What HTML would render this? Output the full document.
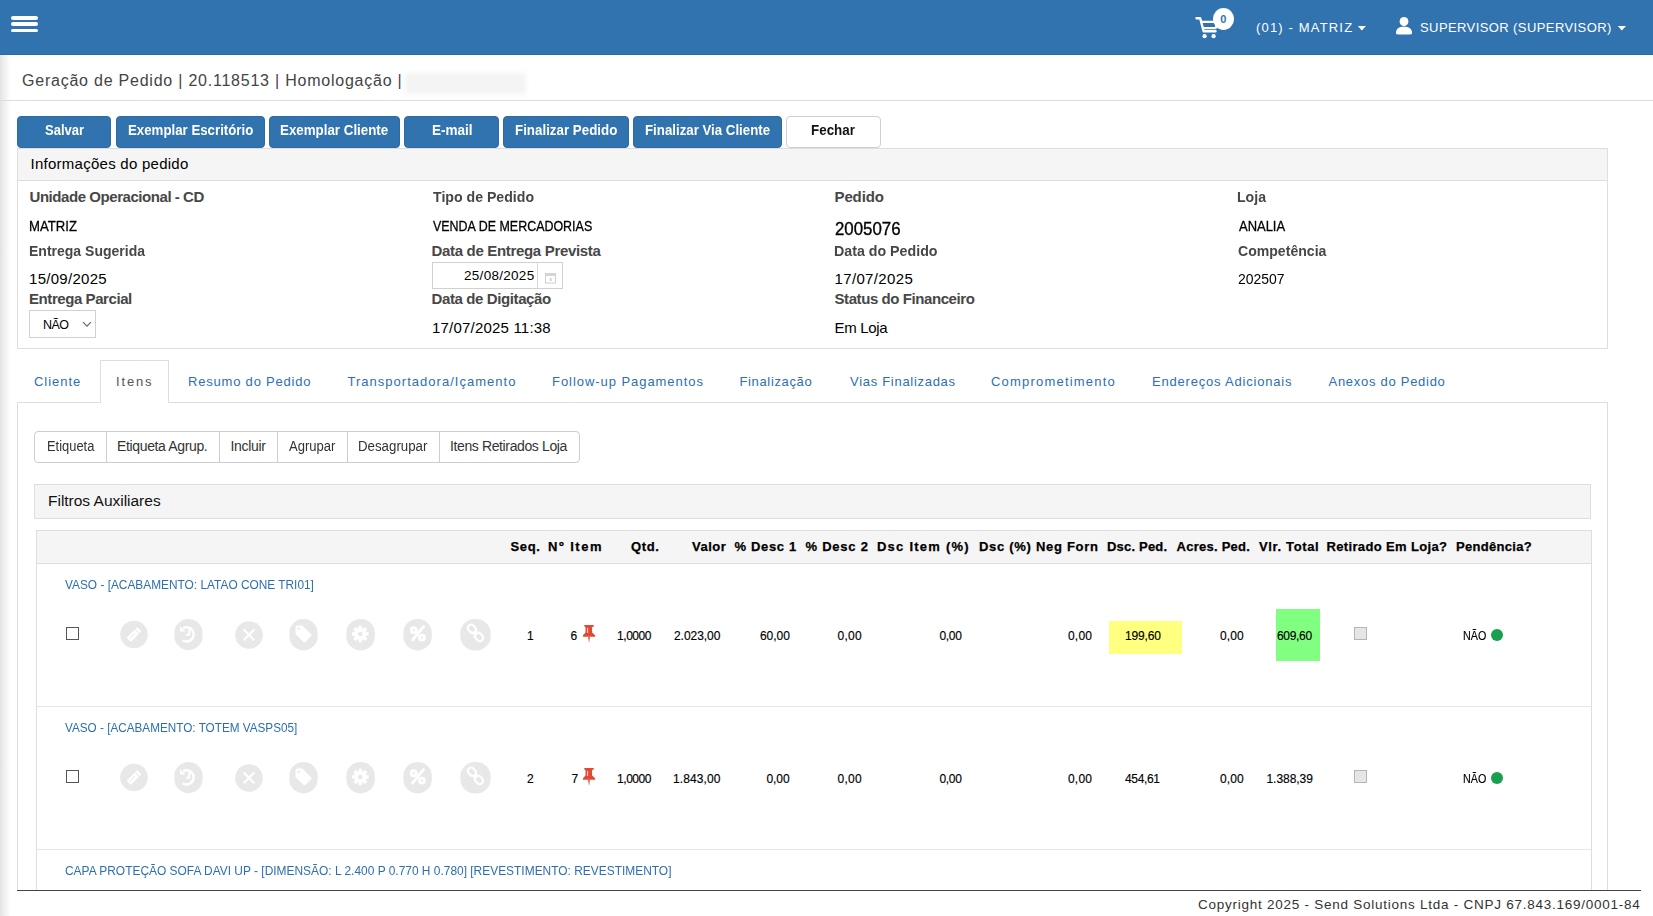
<!DOCTYPE html>
<html><head><meta charset="utf-8"><style>
html,body{margin:0;padding:0;background:#fff;width:1653px;height:916px;overflow:hidden;position:relative;font-family:"Liberation Sans",sans-serif}
.t{position:absolute;white-space:nowrap;line-height:0;font-family:"Liberation Sans",sans-serif}
.a{position:absolute;box-sizing:border-box}
.hdr{left:0;top:0;width:1653px;height:55px;background:#3173ae;border-bottom:1px solid #2c69a4}
.bar{left:11px;width:27px;height:3.6px;background:#fff;border-radius:2px}
.btn{height:32px;top:116px;background:#3173ae;border:1px solid #2d6aa3;border-radius:4px;color:#fff;font-weight:bold;font-size:14px;display:flex;align-items:center;justify-content:center;white-space:nowrap}
.btn.w{background:#fff;border-color:#cfcfcf;color:#111}
.ic{position:absolute;background:#e8e8e8;border-radius:14px;display:flex;align-items:center;justify-content:center}
.ic svg{display:block}
.cb{position:absolute;width:13px;height:13px;box-sizing:border-box;border:1px solid #555;background:#fff}
.cbg{position:absolute;width:13px;height:13px;box-sizing:border-box;border:1px solid #b5b5b5;background:#e6e6e6}
.dot{position:absolute;width:12px;height:12px;border-radius:50%;background:#17a04e}

</style></head><body>
<div class="a hdr"></div>
<div class="a bar" style="top:16px"></div>
<div class="a bar" style="top:22.3px"></div>
<div class="a bar" style="top:28.5px"></div>
<!-- cart -->
<svg class="a" style="left:1194.5px;top:14.5px" width="26" height="26" viewBox="0 0 26 26">
<path d="M1.5 3.2 H5.2 L8.6 16.2 H20.5" fill="none" stroke="#fff" stroke-width="2.4" stroke-linejoin="round" stroke-linecap="round"/>
<path d="M6.4 6.8 H22.6 L20.6 13.2 H8.2" fill="none" stroke="#fff" stroke-width="2.2" stroke-linejoin="round"/>
<circle cx="9.6" cy="21.2" r="2.1" fill="#fff"/><circle cx="18.6" cy="21.2" r="2.1" fill="#fff"/>
</svg>
<div class="a" style="left:1212.5px;top:8px;width:21.5px;height:22px;border-radius:50%;background:#fff;color:#3173ae;font:bold 11px 'Liberation Sans';display:flex;align-items:center;justify-content:center;line-height:1">0</div>
<svg class="a" style="left:1357px;top:25px" width="10" height="7"><path d="M0.8 1 H9 L4.9 5.6Z" fill="#fff"/></svg>
<svg class="a" style="left:1395px;top:16px" width="18" height="19" viewBox="0 0 18 19">
<ellipse cx="9" cy="5.6" rx="4.4" ry="4.6" fill="#fff"/>
<path d="M1 17.2 C1 12.6 4 10.8 9 10.8 C14 10.8 17 12.6 17 17.2 C17 18.3 16 18.6 9 18.6 C2 18.6 1 18.3 1 17.2Z" fill="#fff"/>
</svg>
<svg class="a" style="left:1617px;top:24.5px" width="10" height="7"><path d="M0.8 1 H9 L4.9 5.6Z" fill="#fff"/></svg>

<!-- left shadow -->
<div class="a" style="left:0;top:55px;width:11px;height:861px;background:linear-gradient(to right,#e3e3e3,#f3f3f3 50%,#fff)"></div>
<!-- blurred -->
<div class="a" style="left:405px;top:73px;width:121px;height:21px;background:#f4f4f4;filter:blur(2.5px)"></div>
<div class="a" style="left:0;top:100px;width:1653px;height:1px;background:#dcdcdc"></div>

<!-- buttons -->
<div class="a btn" style="left:17px;width:94px"></div>
<div class="a btn" style="left:116px;width:149px"></div>
<div class="a btn" style="left:269px;width:131px"></div>
<div class="a btn" style="left:404px;width:95px"></div>
<div class="a btn" style="left:503px;width:126px"></div>
<div class="a btn" style="left:633px;width:149px"></div>
<div class="a btn w" style="left:786px;width:95px"></div>

<!-- info panel -->
<div class="a" style="left:17px;top:148px;width:1591px;height:201px;border:1px solid #dedede"></div>
<div class="a" style="left:18px;top:149px;width:1589px;height:32px;background:#f5f5f5;border-bottom:1px solid #dedede"></div>
<!-- select -->
<div class="a" style="left:29px;top:310px;width:67px;height:28px;border:1px solid #d0d0d0;background:#fff"></div>
<svg class="a" style="left:82px;top:321px" width="10" height="7"><path d="M1 1.2 L5 5.2 L9 1.2" fill="none" stroke="#666" stroke-width="1.2"/></svg>
<!-- date input -->
<div class="a" style="left:432px;top:262px;width:131px;height:27px;border:1px solid #d0d0d0;background:#fff"></div>
<div class="a" style="left:537px;top:263px;width:1px;height:25px;background:#d8d8d8"></div>
<svg class="a" style="left:544px;top:271px" width="13" height="13" viewBox="0 0 13 13">
<rect x="1.5" y="2.5" width="10" height="9.5" fill="none" stroke="#cfcfcf" stroke-width="1"/>
<rect x="1.5" y="2.5" width="10" height="2.5" fill="#d6d6d6"/>
<rect x="5.5" y="7" width="2.5" height="3" fill="#dcdcdc"/>
</svg>

<!-- tabs -->
<div class="a" style="left:17px;top:402px;width:1591px;height:488px;border:1px solid #dedede;border-bottom:none"></div>
<div class="a" style="left:100px;top:360px;width:69px;height:43px;border:1px solid #dedede;border-bottom:none;background:#fff"></div>

<!-- button group -->
<div class="a" style="left:34px;top:431px;width:546px;height:32px;border:1px solid #cdcdcd;border-radius:4px;background:#fff"></div>
<div class="a" style="left:106px;top:432px;width:1px;height:30px;background:#cdcdcd"></div>
<div class="a" style="left:219px;top:432px;width:1px;height:30px;background:#cdcdcd"></div>
<div class="a" style="left:277px;top:432px;width:1px;height:30px;background:#cdcdcd"></div>
<div class="a" style="left:347px;top:432px;width:1px;height:30px;background:#cdcdcd"></div>
<div class="a" style="left:439px;top:432px;width:1px;height:30px;background:#cdcdcd"></div>

<!-- filtros -->
<div class="a" style="left:34px;top:484px;width:1557px;height:35px;border:1px solid #dedede;background:#f5f5f5"></div>

<!-- table -->
<div class="a" style="left:36px;top:530px;width:1556px;height:360px;border:1px solid #dedede;border-bottom:none"></div>
<div class="a" style="left:37px;top:531px;width:1554px;height:33px;background:#f5f5f5;border-bottom:1px solid #dedede"></div>
<div class="a" style="left:37px;top:706px;width:1554px;height:1px;background:#e6e6e6"></div>
<div class="a" style="left:37px;top:849px;width:1554px;height:1px;background:#e6e6e6"></div>

<!-- footer -->
<div class="a" style="left:17px;top:889.5px;width:1624px;height:1.5px;background:#444"></div>

<div class="cb" style="left:66px;top:627.0px"></div>
<svg class="a" style="left:119px;top:619.0px" width="30" height="30" viewBox="0 0 30 30"><circle cx="15" cy="15.5" r="13.8" fill="#e8e8e8"/><g transform="rotate(-45 15 15.5)"><rect x="7.5" y="12.6" width="15" height="5.8" rx="1" fill="#fff"/><rect x="19" y="12.6" width="0.9" height="5.8" fill="#e8e8e8"/><rect x="9.5" y="14.8" width="7" height="0.8" fill="#e8e8e8"/></g></svg>
<svg class="a" style="left:173.5px;top:619.0px" width="29" height="32" viewBox="0 0 29 32"><rect x="0.4" y="0" width="28.2" height="31.2" rx="14" fill="#e8e8e8"/><path d="M9.2 9.3 A7 7 0 1 1 8.6 21.2" fill="none" stroke="#fff" stroke-width="2.6"/><path d="M6 7.2 L6 12.6 L11.6 12.6Z" fill="#fff"/><path d="M15.2 10.6 V15.8 H11.8" fill="none" stroke="#fff" stroke-width="2"/></svg>
<svg class="a" style="left:234.5px;top:620.5px" width="29" height="29" viewBox="0 0 29 29"><circle cx="14" cy="14" r="13.8" fill="#e8e8e8"/><path d="M8.7 8.6 L19.3 19.3 M19.3 8.6 L8.7 19.3" stroke="#fff" stroke-width="2.1"/></svg>
<svg class="a" style="left:288.5px;top:618.8px" width="29" height="32" viewBox="0 0 29 32"><rect x="0.4" y="0" width="28.2" height="31.4" rx="14" fill="#e8e8e8"/><path d="M6.5 8.2 Q6.5 6.6 8.1 6.6 L13.4 6.6 L22.2 15.4 Q23 16.2 22.2 17 L16.2 23 Q15.4 23.8 14.6 23 L6.5 14.9Z" fill="#fff"/><circle cx="9.6" cy="9.8" r="1.2" fill="#e8e8e8"/></svg>
<svg class="a" style="left:345.5px;top:618.8px" width="29" height="32" viewBox="0 0 29 32"><rect x="0.4" y="0" width="28.4" height="31.4" rx="14" fill="#e8e8e8"/><rect x="19.20" y="13.30" width="3.4" height="3.4" transform="rotate(0.0 20.90 15.00)" fill="#fff"/><rect x="17.27" y="17.97" width="3.4" height="3.4" transform="rotate(45.0 18.97 19.67)" fill="#fff"/><rect x="12.60" y="19.90" width="3.4" height="3.4" transform="rotate(90.0 14.30 21.60)" fill="#fff"/><rect x="7.93" y="17.97" width="3.4" height="3.4" transform="rotate(135.0 9.63 19.67)" fill="#fff"/><rect x="6.00" y="13.30" width="3.4" height="3.4" transform="rotate(180.0 7.70 15.00)" fill="#fff"/><rect x="7.93" y="8.63" width="3.4" height="3.4" transform="rotate(225.0 9.63 10.33)" fill="#fff"/><rect x="12.60" y="6.70" width="3.4" height="3.4" transform="rotate(270.0 14.30 8.40)" fill="#fff"/><rect x="17.27" y="8.63" width="3.4" height="3.4" transform="rotate(315.0 18.97 10.33)" fill="#fff"/><circle cx="14.3" cy="15" r="6.2" fill="#fff"/><circle cx="14.3" cy="15" r="2.3" fill="#e8e8e8"/></svg>
<svg class="a" style="left:402.5px;top:618.8px" width="29" height="32" viewBox="0 0 29 32"><rect x="0.4" y="0" width="28.4" height="31.4" rx="14" fill="#e8e8e8"/><circle cx="10.7" cy="11.2" r="2.5" fill="none" stroke="#fff" stroke-width="2.8"/><circle cx="18.9" cy="18.6" r="2.5" fill="none" stroke="#fff" stroke-width="2.8"/><path d="M21.3 6.6 L8.9 21.9" stroke="#fff" stroke-width="2.8"/></svg>
<svg class="a" style="left:459.5px;top:618.8px" width="31" height="32" viewBox="0 0 31 32"><rect x="0.3" y="0" width="30.4" height="31.4" rx="14.5" fill="#e8e8e8"/><g fill="none" stroke="#fff" stroke-width="2.2"><rect x="7.5" y="6.5" width="9" height="6.6" rx="3.1" transform="rotate(45 12 9.8)"/><rect x="14.4" y="14.6" width="9" height="6.6" rx="3.1" transform="rotate(45 18.9 17.9)"/><path d="M13.6 12.4 L17.4 15.4"/></g></svg>
<svg class="a" style="left:582px;top:624.0px" width="15" height="19" viewBox="0 0 15 19"><g fill="#e04a35"><path d="M2.6 1 H11.4 L11.9 1.8 L11.4 2.8 L10.1 3.1 V8.6 L13.1 11.2 V12.8 H1 V11.2 L3.5 8.6 V3.1 L2.6 2.8 L2.1 1.8Z"/><path d="M6.1 12.8 H7.9 L7.1 18.9Z"/></g><rect x="5" y="4" width="1.1" height="5" fill="#f6d0c8"/></svg>
<div class="a" style="left:1109px;top:621px;width:73px;height:33px;background:#ffff80"></div>
<div class="a" style="left:1276px;top:609px;width:44px;height:52px;background:#80ff80"></div>
<div class="cbg" style="left:1354px;top:627.0px"></div>
<div class="dot" style="left:1490.7px;top:629.0px"></div>
<div class="cb" style="left:66px;top:770.3px"></div>
<svg class="a" style="left:119px;top:762.3px" width="30" height="30" viewBox="0 0 30 30"><circle cx="15" cy="15.5" r="13.8" fill="#e8e8e8"/><g transform="rotate(-45 15 15.5)"><rect x="7.5" y="12.6" width="15" height="5.8" rx="1" fill="#fff"/><rect x="19" y="12.6" width="0.9" height="5.8" fill="#e8e8e8"/><rect x="9.5" y="14.8" width="7" height="0.8" fill="#e8e8e8"/></g></svg>
<svg class="a" style="left:173.5px;top:762.3px" width="29" height="32" viewBox="0 0 29 32"><rect x="0.4" y="0" width="28.2" height="31.2" rx="14" fill="#e8e8e8"/><path d="M9.2 9.3 A7 7 0 1 1 8.6 21.2" fill="none" stroke="#fff" stroke-width="2.6"/><path d="M6 7.2 L6 12.6 L11.6 12.6Z" fill="#fff"/><path d="M15.2 10.6 V15.8 H11.8" fill="none" stroke="#fff" stroke-width="2"/></svg>
<svg class="a" style="left:234.5px;top:763.8px" width="29" height="29" viewBox="0 0 29 29"><circle cx="14" cy="14" r="13.8" fill="#e8e8e8"/><path d="M8.7 8.6 L19.3 19.3 M19.3 8.6 L8.7 19.3" stroke="#fff" stroke-width="2.1"/></svg>
<svg class="a" style="left:288.5px;top:762.1px" width="29" height="32" viewBox="0 0 29 32"><rect x="0.4" y="0" width="28.2" height="31.4" rx="14" fill="#e8e8e8"/><path d="M6.5 8.2 Q6.5 6.6 8.1 6.6 L13.4 6.6 L22.2 15.4 Q23 16.2 22.2 17 L16.2 23 Q15.4 23.8 14.6 23 L6.5 14.9Z" fill="#fff"/><circle cx="9.6" cy="9.8" r="1.2" fill="#e8e8e8"/></svg>
<svg class="a" style="left:345.5px;top:762.1px" width="29" height="32" viewBox="0 0 29 32"><rect x="0.4" y="0" width="28.4" height="31.4" rx="14" fill="#e8e8e8"/><rect x="19.20" y="13.30" width="3.4" height="3.4" transform="rotate(0.0 20.90 15.00)" fill="#fff"/><rect x="17.27" y="17.97" width="3.4" height="3.4" transform="rotate(45.0 18.97 19.67)" fill="#fff"/><rect x="12.60" y="19.90" width="3.4" height="3.4" transform="rotate(90.0 14.30 21.60)" fill="#fff"/><rect x="7.93" y="17.97" width="3.4" height="3.4" transform="rotate(135.0 9.63 19.67)" fill="#fff"/><rect x="6.00" y="13.30" width="3.4" height="3.4" transform="rotate(180.0 7.70 15.00)" fill="#fff"/><rect x="7.93" y="8.63" width="3.4" height="3.4" transform="rotate(225.0 9.63 10.33)" fill="#fff"/><rect x="12.60" y="6.70" width="3.4" height="3.4" transform="rotate(270.0 14.30 8.40)" fill="#fff"/><rect x="17.27" y="8.63" width="3.4" height="3.4" transform="rotate(315.0 18.97 10.33)" fill="#fff"/><circle cx="14.3" cy="15" r="6.2" fill="#fff"/><circle cx="14.3" cy="15" r="2.3" fill="#e8e8e8"/></svg>
<svg class="a" style="left:402.5px;top:762.1px" width="29" height="32" viewBox="0 0 29 32"><rect x="0.4" y="0" width="28.4" height="31.4" rx="14" fill="#e8e8e8"/><circle cx="10.7" cy="11.2" r="2.5" fill="none" stroke="#fff" stroke-width="2.8"/><circle cx="18.9" cy="18.6" r="2.5" fill="none" stroke="#fff" stroke-width="2.8"/><path d="M21.3 6.6 L8.9 21.9" stroke="#fff" stroke-width="2.8"/></svg>
<svg class="a" style="left:459.5px;top:762.1px" width="31" height="32" viewBox="0 0 31 32"><rect x="0.3" y="0" width="30.4" height="31.4" rx="14.5" fill="#e8e8e8"/><g fill="none" stroke="#fff" stroke-width="2.2"><rect x="7.5" y="6.5" width="9" height="6.6" rx="3.1" transform="rotate(45 12 9.8)"/><rect x="14.4" y="14.6" width="9" height="6.6" rx="3.1" transform="rotate(45 18.9 17.9)"/><path d="M13.6 12.4 L17.4 15.4"/></g></svg>
<svg class="a" style="left:582px;top:767.3px" width="15" height="19" viewBox="0 0 15 19"><g fill="#e04a35"><path d="M2.6 1 H11.4 L11.9 1.8 L11.4 2.8 L10.1 3.1 V8.6 L13.1 11.2 V12.8 H1 V11.2 L3.5 8.6 V3.1 L2.6 2.8 L2.1 1.8Z"/><path d="M6.1 12.8 H7.9 L7.1 18.9Z"/></g><rect x="5" y="4" width="1.1" height="5" fill="#f6d0c8"/></svg>
<div class="cbg" style="left:1354px;top:770.3px"></div>
<div class="dot" style="left:1490.7px;top:772.3px"></div>
<div class="t" style="left:1256.00px;top:28px;font-size:13px;font-weight:normal;color:#fff;letter-spacing:1.167px;">(01) - MATRIZ</div>
<div class="t" style="left:1420.00px;top:28px;font-size:13px;font-weight:normal;color:#fff;letter-spacing:0.409px;">SUPERVISOR (SUPERVISOR)</div>
<div class="t" style="left:22.00px;top:81px;font-size:16px;font-weight:normal;color:#444;letter-spacing:0.773px;">Geração de Pedido | 20.118513 | Homologação |</div>
<div class="t" style="left:45.00px;top:130px;font-size:14.5px;font-weight:bold;color:#fff;letter-spacing:0.000px;transform:scaleX(0.8981);transform-origin:0 0;">Salvar</div>
<div class="t" style="left:127.50px;top:130px;font-size:14.5px;font-weight:bold;color:#fff;letter-spacing:0.000px;transform:scaleX(0.9147);transform-origin:0 0;">Exemplar Escritório</div>
<div class="t" style="left:280.00px;top:130px;font-size:14.5px;font-weight:bold;color:#fff;letter-spacing:0.000px;transform:scaleX(0.9197);transform-origin:0 0;">Exemplar Cliente</div>
<div class="t" style="left:431.50px;top:130px;font-size:14.5px;font-weight:bold;color:#fff;letter-spacing:0.000px;transform:scaleX(0.9335);transform-origin:0 0;">E-mail</div>
<div class="t" style="left:514.50px;top:130px;font-size:14.5px;font-weight:bold;color:#fff;letter-spacing:0.000px;transform:scaleX(0.9200);transform-origin:0 0;">Finalizar Pedido</div>
<div class="t" style="left:644.50px;top:130px;font-size:14.5px;font-weight:bold;color:#fff;letter-spacing:0.000px;transform:scaleX(0.9147);transform-origin:0 0;">Finalizar Via Cliente</div>
<div class="t" style="left:811.00px;top:130px;font-size:14.5px;font-weight:bold;color:#111;letter-spacing:0.000px;transform:scaleX(0.9234);transform-origin:0 0;">Fechar</div>
<div class="t" style="left:30.50px;top:164px;font-size:15px;font-weight:normal;color:#000;letter-spacing:0.260px;">Informações do pedido</div>
<div class="t" style="left:29.50px;top:197px;font-size:15px;font-weight:bold;color:#474747;letter-spacing:-0.443px;">Unidade Operacional - CD</div>
<div class="t" style="left:432.50px;top:197px;font-size:15px;font-weight:bold;color:#474747;letter-spacing:0.000px;transform:scaleX(0.9421);transform-origin:0 0;">Tipo de Pedido</div>
<div class="t" style="left:834.50px;top:197px;font-size:15px;font-weight:bold;color:#474747;letter-spacing:-0.120px;">Pedido</div>
<div class="t" style="left:1237.00px;top:197px;font-size:15px;font-weight:bold;color:#474747;letter-spacing:0.000px;transform:scaleX(0.9404);transform-origin:0 0;">Loja</div>
<div class="t" style="left:28.50px;top:226px;font-size:15px;font-weight:normal;color:#000;letter-spacing:0.000px;transform:scaleX(0.8756);transform-origin:0 0;-webkit-text-stroke:0.3px #000;">MATRIZ</div>
<div class="t" style="left:433.00px;top:226px;font-size:15px;font-weight:normal;color:#000;letter-spacing:0.000px;transform:scaleX(0.8304);transform-origin:0 0;-webkit-text-stroke:0.3px #000;">VENDA DE MERCADORIAS</div>
<div class="t" style="left:835.00px;top:229px;font-size:18px;font-weight:normal;color:#000;letter-spacing:0.000px;transform:scaleX(0.9364);transform-origin:0 0;-webkit-text-stroke:0.35px #000;">2005076</div>
<div class="t" style="left:1238.50px;top:226px;font-size:15px;font-weight:normal;color:#000;letter-spacing:0.000px;transform:scaleX(0.8644);transform-origin:0 0;-webkit-text-stroke:0.3px #000;">ANALIA</div>
<div class="t" style="left:29.00px;top:251px;font-size:15px;font-weight:bold;color:#474747;letter-spacing:0.000px;transform:scaleX(0.9339);transform-origin:0 0;">Entrega Sugerida</div>
<div class="t" style="left:431.50px;top:251px;font-size:15px;font-weight:bold;color:#474747;letter-spacing:-0.322px;">Data de Entrega Prevista</div>
<div class="t" style="left:833.50px;top:251px;font-size:15px;font-weight:bold;color:#474747;letter-spacing:0.000px;transform:scaleX(0.9482);transform-origin:0 0;">Data do Pedido</div>
<div class="t" style="left:1238.00px;top:251px;font-size:15px;font-weight:bold;color:#474747;letter-spacing:0.000px;transform:scaleX(0.9383);transform-origin:0 0;">Competência</div>
<div class="t" style="left:29.00px;top:279px;font-size:15px;font-weight:normal;color:#000;letter-spacing:0.289px;">15/09/2025</div>
<div class="t" style="left:464.00px;top:276px;font-size:13.5px;font-weight:normal;color:#000;letter-spacing:0.289px;">25/08/2025</div>
<div class="t" style="left:834.50px;top:279px;font-size:15px;font-weight:normal;color:#000;letter-spacing:0.356px;">17/07/2025</div>
<div class="t" style="left:1238.00px;top:279px;font-size:15px;font-weight:normal;color:#000;letter-spacing:0.000px;transform:scaleX(0.9308);transform-origin:0 0;">202507</div>
<div class="t" style="left:29.00px;top:299px;font-size:15px;font-weight:bold;color:#474747;letter-spacing:-0.429px;">Entrega Parcial</div>
<div class="t" style="left:431.50px;top:299px;font-size:15px;font-weight:bold;color:#474747;letter-spacing:-0.388px;">Data de Digitação</div>
<div class="t" style="left:834.50px;top:299px;font-size:15px;font-weight:bold;color:#474747;letter-spacing:-0.421px;">Status do Financeiro</div>
<div class="t" style="left:43.00px;top:325px;font-size:12.5px;font-weight:normal;color:#000;letter-spacing:-0.600px;">NÃO</div>
<div class="t" style="left:432.00px;top:328px;font-size:15px;font-weight:normal;color:#000;letter-spacing:0.200px;">17/07/2025 11:38</div>
<div class="t" style="left:834.50px;top:328px;font-size:15px;font-weight:normal;color:#000;letter-spacing:-0.333px;">Em Loja</div>
<div class="t" style="left:34.00px;top:382px;font-size:13px;font-weight:normal;color:#2d6fb2;letter-spacing:0.967px;">Cliente</div>
<div class="t" style="left:116.00px;top:382px;font-size:13px;font-weight:normal;color:#555;letter-spacing:1.850px;">Itens</div>
<div class="t" style="left:188.00px;top:382px;font-size:13px;font-weight:normal;color:#2d6fb2;letter-spacing:0.800px;">Resumo do Pedido</div>
<div class="t" style="left:347.50px;top:382px;font-size:13px;font-weight:normal;color:#2d6fb2;letter-spacing:1.018px;">Transportadora/Içamento</div>
<div class="t" style="left:552.00px;top:382px;font-size:13px;font-weight:normal;color:#2d6fb2;letter-spacing:0.947px;">Follow-up Pagamentos</div>
<div class="t" style="left:739.50px;top:382px;font-size:13px;font-weight:normal;color:#2d6fb2;letter-spacing:0.640px;">Finalização</div>
<div class="t" style="left:850.00px;top:382px;font-size:13px;font-weight:normal;color:#2d6fb2;letter-spacing:0.707px;">Vias Finalizadas</div>
<div class="t" style="left:991.00px;top:382px;font-size:13px;font-weight:normal;color:#2d6fb2;letter-spacing:1.200px;">Comprometimento</div>
<div class="t" style="left:1152.00px;top:382px;font-size:13px;font-weight:normal;color:#2d6fb2;letter-spacing:0.800px;">Endereços Adicionais</div>
<div class="t" style="left:1328.50px;top:382px;font-size:13px;font-weight:normal;color:#2d6fb2;letter-spacing:0.720px;">Anexos do Pedido</div>
<div class="t" style="left:46.50px;top:446px;font-size:14px;font-weight:normal;color:#333;letter-spacing:0.000px;transform:scaleX(0.9216);transform-origin:0 0;">Etiqueta</div>
<div class="t" style="left:117.00px;top:446px;font-size:14px;font-weight:normal;color:#333;letter-spacing:-0.357px;">Etiqueta Agrup.</div>
<div class="t" style="left:230.50px;top:446px;font-size:14px;font-weight:normal;color:#333;letter-spacing:-0.333px;">Incluir</div>
<div class="t" style="left:289.00px;top:446px;font-size:14px;font-weight:normal;color:#333;letter-spacing:0.000px;transform:scaleX(0.9320);transform-origin:0 0;">Agrupar</div>
<div class="t" style="left:358.00px;top:446px;font-size:14px;font-weight:normal;color:#333;letter-spacing:0.000px;transform:scaleX(0.9483);transform-origin:0 0;">Desagrupar</div>
<div class="t" style="left:450.00px;top:446px;font-size:14px;font-weight:normal;color:#333;letter-spacing:-0.379px;">Itens Retirados Loja</div>
<div class="t" style="left:48.00px;top:501px;font-size:15.5px;font-weight:normal;color:#111;letter-spacing:-0.012px;">Filtros Auxiliares</div>
<div class="t" style="left:510.50px;top:547px;font-size:13px;font-weight:bold;color:#000;letter-spacing:0.667px;-webkit-text-stroke:0.25px #000;">Seq.</div>
<div class="t" style="left:548.00px;top:547px;font-size:13px;font-weight:bold;color:#000;letter-spacing:1.500px;-webkit-text-stroke:0.25px #000;">Nº Item</div>
<div class="t" style="left:631.00px;top:547px;font-size:13px;font-weight:bold;color:#000;letter-spacing:0.600px;-webkit-text-stroke:0.25px #000;">Qtd.</div>
<div class="t" style="left:692.00px;top:547px;font-size:13px;font-weight:bold;color:#000;letter-spacing:0.500px;-webkit-text-stroke:0.25px #000;">Valor</div>
<div class="t" style="left:734.50px;top:547px;font-size:13px;font-weight:bold;color:#000;letter-spacing:0.657px;-webkit-text-stroke:0.25px #000;">% Desc 1</div>
<div class="t" style="left:805.50px;top:547px;font-size:13px;font-weight:bold;color:#000;letter-spacing:0.771px;-webkit-text-stroke:0.25px #000;">% Desc 2</div>
<div class="t" style="left:877.00px;top:547px;font-size:13px;font-weight:bold;color:#000;letter-spacing:1.236px;-webkit-text-stroke:0.25px #000;">Dsc Item (%)</div>
<div class="t" style="left:979.00px;top:547px;font-size:13px;font-weight:bold;color:#000;letter-spacing:0.707px;-webkit-text-stroke:0.25px #000;">Dsc (%) Neg Forn</div>
<div class="t" style="left:1107.00px;top:547px;font-size:13px;font-weight:bold;color:#000;letter-spacing:0.200px;-webkit-text-stroke:0.25px #000;">Dsc. Ped.</div>
<div class="t" style="left:1176.50px;top:547px;font-size:13px;font-weight:bold;color:#000;letter-spacing:0.260px;-webkit-text-stroke:0.25px #000;">Acres. Ped.</div>
<div class="t" style="left:1259.00px;top:547px;font-size:13px;font-weight:bold;color:#000;letter-spacing:0.644px;-webkit-text-stroke:0.25px #000;">Vlr. Total</div>
<div class="t" style="left:1326.50px;top:547px;font-size:13px;font-weight:bold;color:#000;letter-spacing:0.350px;-webkit-text-stroke:0.25px #000;">Retirado Em Loja?</div>
<div class="t" style="left:1456.00px;top:547px;font-size:13px;font-weight:bold;color:#000;letter-spacing:0.311px;-webkit-text-stroke:0.25px #000;">Pendência?</div>
<div class="t" style="left:64.50px;top:585px;font-size:13px;font-weight:normal;color:#2d6fb2;letter-spacing:0.000px;transform:scaleX(0.9132);transform-origin:0 0;">VASO - [ACABAMENTO: LATAO CONE TRI01]</div>
<div class="t" style="left:64.50px;top:728px;font-size:13px;font-weight:normal;color:#2d6fb2;letter-spacing:0.000px;transform:scaleX(0.9024);transform-origin:0 0;">VASO - [ACABAMENTO: TOTEM VASPS05]</div>
<div class="t" style="left:64.50px;top:871px;font-size:13px;font-weight:normal;color:#2d6fb2;letter-spacing:0.000px;transform:scaleX(0.9181);transform-origin:0 0;">CAPA PROTEÇÃO SOFA DAVI UP - [DIMENSÃO: L 2.400 P 0.770 H 0.780] [REVESTIMENTO: REVESTIMENTO]</div>
<div class="t" style="left:527.00px;top:636px;font-size:12px;font-weight:normal;color:#000;letter-spacing:0.000px;-webkit-text-stroke:0.15px #000;">1</div>
<div class="t" style="left:570.50px;top:636px;font-size:12px;font-weight:normal;color:#000;letter-spacing:0.000px;-webkit-text-stroke:0.15px #000;">6</div>
<div class="t" style="left:617.00px;top:636px;font-size:12px;font-weight:normal;color:#000;letter-spacing:-0.440px;-webkit-text-stroke:0.15px #000;">1,0000</div>
<div class="t" style="left:674.00px;top:636px;font-size:12px;font-weight:normal;color:#000;letter-spacing:-0.057px;-webkit-text-stroke:0.15px #000;">2.023,00</div>
<div class="t" style="left:760.00px;top:636px;font-size:12px;font-weight:normal;color:#000;letter-spacing:-0.050px;-webkit-text-stroke:0.15px #000;">60,00</div>
<div class="t" style="left:837.50px;top:636px;font-size:12px;font-weight:normal;color:#000;letter-spacing:0.267px;-webkit-text-stroke:0.15px #000;">0,00</div>
<div class="t" style="left:939.50px;top:636px;font-size:12px;font-weight:normal;color:#000;letter-spacing:-0.333px;-webkit-text-stroke:0.15px #000;">0,00</div>
<div class="t" style="left:1068.00px;top:636px;font-size:12px;font-weight:normal;color:#000;letter-spacing:0.200px;-webkit-text-stroke:0.15px #000;">0,00</div>
<div class="t" style="left:1125.00px;top:636px;font-size:12px;font-weight:normal;color:#000;letter-spacing:-0.160px;-webkit-text-stroke:0.15px #000;">199,60</div>
<div class="t" style="left:1220.00px;top:636px;font-size:12px;font-weight:normal;color:#000;letter-spacing:0.067px;-webkit-text-stroke:0.15px #000;">0,00</div>
<div class="t" style="left:1277.00px;top:636px;font-size:12px;font-weight:normal;color:#000;letter-spacing:-0.320px;-webkit-text-stroke:0.15px #000;">609,60</div>
<div class="t" style="left:1462.50px;top:636px;font-size:12px;font-weight:normal;color:#000;letter-spacing:0.000px;transform:scaleX(0.8961);transform-origin:0 0;-webkit-text-stroke:0.15px #000;">NÃO</div>
<div class="t" style="left:527.00px;top:779px;font-size:12px;font-weight:normal;color:#000;letter-spacing:0.000px;-webkit-text-stroke:0.15px #000;">2</div>
<div class="t" style="left:571.50px;top:779px;font-size:12px;font-weight:normal;color:#000;letter-spacing:0.000px;-webkit-text-stroke:0.15px #000;">7</div>
<div class="t" style="left:617.00px;top:779px;font-size:12px;font-weight:normal;color:#000;letter-spacing:-0.440px;-webkit-text-stroke:0.15px #000;">1,0000</div>
<div class="t" style="left:673.00px;top:779px;font-size:12px;font-weight:normal;color:#000;letter-spacing:0.086px;-webkit-text-stroke:0.15px #000;">1.843,00</div>
<div class="t" style="left:766.50px;top:779px;font-size:12px;font-weight:normal;color:#000;letter-spacing:-0.067px;-webkit-text-stroke:0.15px #000;">0,00</div>
<div class="t" style="left:837.50px;top:779px;font-size:12px;font-weight:normal;color:#000;letter-spacing:0.267px;-webkit-text-stroke:0.15px #000;">0,00</div>
<div class="t" style="left:939.50px;top:779px;font-size:12px;font-weight:normal;color:#000;letter-spacing:-0.333px;-webkit-text-stroke:0.15px #000;">0,00</div>
<div class="t" style="left:1068.00px;top:779px;font-size:12px;font-weight:normal;color:#000;letter-spacing:0.200px;-webkit-text-stroke:0.15px #000;">0,00</div>
<div class="t" style="left:1125.00px;top:779px;font-size:12px;font-weight:normal;color:#000;letter-spacing:-0.360px;-webkit-text-stroke:0.15px #000;">454,61</div>
<div class="t" style="left:1220.00px;top:779px;font-size:12px;font-weight:normal;color:#000;letter-spacing:0.067px;-webkit-text-stroke:0.15px #000;">0,00</div>
<div class="t" style="left:1266.50px;top:779px;font-size:12px;font-weight:normal;color:#000;letter-spacing:-0.057px;-webkit-text-stroke:0.15px #000;">1.388,39</div>
<div class="t" style="left:1462.50px;top:779px;font-size:12px;font-weight:normal;color:#000;letter-spacing:0.000px;transform:scaleX(0.8961);transform-origin:0 0;-webkit-text-stroke:0.15px #000;">NÃO</div>
<div class="t" style="left:1198.00px;top:905px;font-size:13.5px;font-weight:normal;color:#333;letter-spacing:0.744px;">Copyright 2025 - Send Solutions Ltda - CNPJ 67.843.169/0001-84</div>
</body></html>
